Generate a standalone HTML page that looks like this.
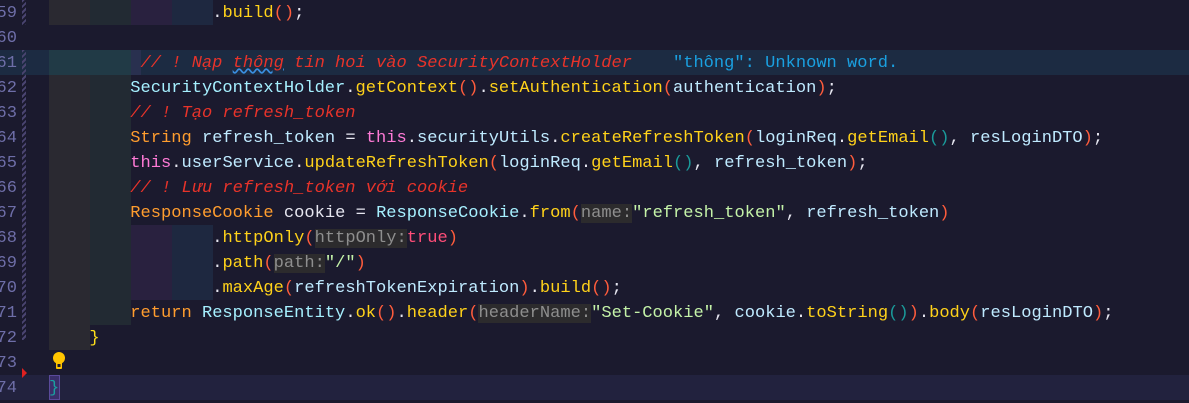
<!DOCTYPE html>
<html><head><meta charset="utf-8"><style>
body{margin:0;width:1189px;height:403px;background:#1b1a2e;overflow:hidden;position:relative;font-family:"Liberation Mono",monospace;font-size:17.07px}
.l{position:absolute;left:0;width:1189px;height:25px;line-height:27px;white-space:pre}
.t{position:absolute;left:7.4px;top:0}
.n{position:absolute;right:1172px;color:#6e6ea8;font-family:"Liberation Mono",monospace}
.b{position:absolute;top:0;height:25px}
.g1{background:#2a2931}.g2{background:#222a33}.g3{background:#29213f}.g4{background:#1e2840}
.c{color:#e8332a;font-style:italic}
.k{color:#ff9d2e}.cl{color:#a6f0ff}.m{color:#ffd21a}.p{color:#ff5c3c}.v{color:#bfeaff}.w{color:#e6e6f0}
.th{color:#ff7ad6}.s{color:#c4f2a8}.tr{color:#ff4d78}.h{background:#2c2b2d;color:#8e8e8e}.pt{color:#1a9a9a}
</style></head><body>
<div class="l" style="top:0"><span class="b g1" style="left:49px;width:41px"></span><span class="b g2" style="left:90px;width:41px"></span><span class="b g3" style="left:131px;width:41px"></span><span class="b g4" style="left:172px;width:41px"></span><span class="n">59</span><span class="t">                    <span class="w">.</span><span class="m">build</span><span class="p">()</span><span class="w">;</span></span></div>
<div class="l" style="top:25px"><span class="n">60</span></div>
<div class="l" style="top:50px;background:#1c2b42"><span class="b" style="left:49px;width:82px;background:#213a46"></span><span class="b" style="left:131px;width:10px;background:#29304f"></span><span class="n">61</span><span class="t">             <span class="c">// ! Nạp <span style="text-decoration:underline wavy #3a8ee0">thông</span> tin hoi vào SecurityContextHolder</span>    <span style="color:#1aa0e0">"thông": Unknown word.</span></span></div>
<div class="l" style="top:75px"><span class="b g1" style="left:49px;width:41px"></span><span class="b g2" style="left:90px;width:41px"></span><span class="n">62</span><span class="t">            <span class="cl">SecurityContextHolder</span><span class="w">.</span><span class="m">getContext</span><span class="p">()</span><span class="w">.</span><span class="m">setAuthentication</span><span class="p">(</span><span class="v">authentication</span><span class="p">)</span><span class="w">;</span></span></div>
<div class="l" style="top:100px"><span class="b g1" style="left:49px;width:41px"></span><span class="b g2" style="left:90px;width:41px"></span><span class="n">63</span><span class="t">            <span class="c">// ! Tạo refresh_token</span></span></div>
<div class="l" style="top:125px"><span class="b g1" style="left:49px;width:41px"></span><span class="b g2" style="left:90px;width:41px"></span><span class="n">64</span><span class="t">            <span class="k">String</span> <span class="v">refresh_token</span> <span class="w">=</span> <span class="th">this</span><span class="w">.</span><span class="v">securityUtils</span><span class="w">.</span><span class="m">createRefreshToken</span><span class="p">(</span><span class="v">loginReq</span><span class="w">.</span><span class="m">getEmail</span><span class="pt">()</span><span class="w">,</span> <span class="v">resLoginDTO</span><span class="p">)</span><span class="w">;</span></span></div>
<div class="l" style="top:150px"><span class="b g1" style="left:49px;width:41px"></span><span class="b g2" style="left:90px;width:41px"></span><span class="n">65</span><span class="t">            <span class="th">this</span><span class="w">.</span><span class="v">userService</span><span class="w">.</span><span class="m">updateRefreshToken</span><span class="p">(</span><span class="v">loginReq</span><span class="w">.</span><span class="m">getEmail</span><span class="pt">()</span><span class="w">,</span> <span class="v">refresh_token</span><span class="p">)</span><span class="w">;</span></span></div>
<div class="l" style="top:175px"><span class="b g1" style="left:49px;width:41px"></span><span class="b g2" style="left:90px;width:41px"></span><span class="n">66</span><span class="t">            <span class="c">// ! Lưu refresh_token với cookie</span></span></div>
<div class="l" style="top:200px"><span class="b g1" style="left:49px;width:41px"></span><span class="b g2" style="left:90px;width:41px"></span><span class="n">67</span><span class="t">            <span class="k">ResponseCookie</span> <span class="w">cookie</span> <span class="w">=</span> <span class="cl">ResponseCookie</span><span class="w">.</span><span class="m">from</span><span class="p">(</span><span class="h">name:</span><span class="s">"refresh_token"</span><span class="w">,</span> <span class="v">refresh_token</span><span class="p">)</span></span></div>
<div class="l" style="top:225px"><span class="b g1" style="left:49px;width:41px"></span><span class="b g2" style="left:90px;width:41px"></span><span class="b g3" style="left:131px;width:41px"></span><span class="b g4" style="left:172px;width:41px"></span><span class="n">68</span><span class="t">                    <span class="w">.</span><span class="m">httpOnly</span><span class="p">(</span><span class="h">httpOnly:</span><span class="tr">true</span><span class="p">)</span></span></div>
<div class="l" style="top:250px"><span class="b g1" style="left:49px;width:41px"></span><span class="b g2" style="left:90px;width:41px"></span><span class="b g3" style="left:131px;width:41px"></span><span class="b g4" style="left:172px;width:41px"></span><span class="n">69</span><span class="t">                    <span class="w">.</span><span class="m">path</span><span class="p">(</span><span class="h">path:</span><span class="s">"/"</span><span class="p">)</span></span></div>
<div class="l" style="top:275px"><span class="b g1" style="left:49px;width:41px"></span><span class="b g2" style="left:90px;width:41px"></span><span class="b g3" style="left:131px;width:41px"></span><span class="b g4" style="left:172px;width:41px"></span><span class="n">70</span><span class="t">                    <span class="w">.</span><span class="m">maxAge</span><span class="p">(</span><span class="v">refreshTokenExpiration</span><span class="p">)</span><span class="w">.</span><span class="m">build</span><span class="p">()</span><span class="w">;</span></span></div>
<div class="l" style="top:300px"><span class="b g1" style="left:49px;width:41px"></span><span class="b g2" style="left:90px;width:41px"></span><span class="n">71</span><span class="t">            <span class="k">return</span> <span class="cl">ResponseEntity</span><span class="w">.</span><span class="m">ok</span><span class="p">()</span><span class="w">.</span><span class="m">header</span><span class="p">(</span><span class="h">headerName:</span><span class="s">"Set-Cookie"</span><span class="w">,</span> <span class="v">cookie</span><span class="w">.</span><span class="m">toString</span><span class="pt">()</span><span class="p">)</span><span class="w">.</span><span class="m">body</span><span class="p">(</span><span class="v">resLoginDTO</span><span class="p">)</span><span class="w">;</span></span></div>
<div class="l" style="top:325px"><span class="b g1" style="left:49px;width:41px"></span><span class="n">72</span><span class="t">        <span style="color:#ffe01a">}</span></span></div>
<div class="l" style="top:350px"><span class="n">73</span>
<svg style="position:absolute;left:51px;top:1px" width="16" height="20" viewBox="0 0 16 20"><circle cx="8" cy="7" r="6" fill="#ffc400"/><rect x="5" y="11" width="6" height="7" rx="1" fill="#ffc400"/><rect x="6.5" y="13" width="3" height="3" fill="#1b1a2e"/></svg></div>
<div class="l" style="top:375px;background:#22223e"><span class="n">74</span><span style="position:absolute;left:49px;top:0;width:9px;height:23px;border:1px solid #5a4a9a;background:#3a2f6a"></span><span class="t" style="left:49px;color:#1aa0a0">}</span></div>
<div style="position:absolute;left:22px;top:368px;width:0;height:0;border-top:5px solid transparent;border-bottom:5px solid transparent;border-left:5px solid #e02020"></div>
<div style="position:absolute;left:22px;top:0;width:4px;height:25px;background:repeating-linear-gradient(135deg,#4a4470 0 2px,transparent 2px 4px)"></div>
<div style="position:absolute;left:22px;top:50px;width:4px;height:290px;background:repeating-linear-gradient(135deg,#4a4470 0 2px,transparent 2px 4px)"></div>
</body></html>
